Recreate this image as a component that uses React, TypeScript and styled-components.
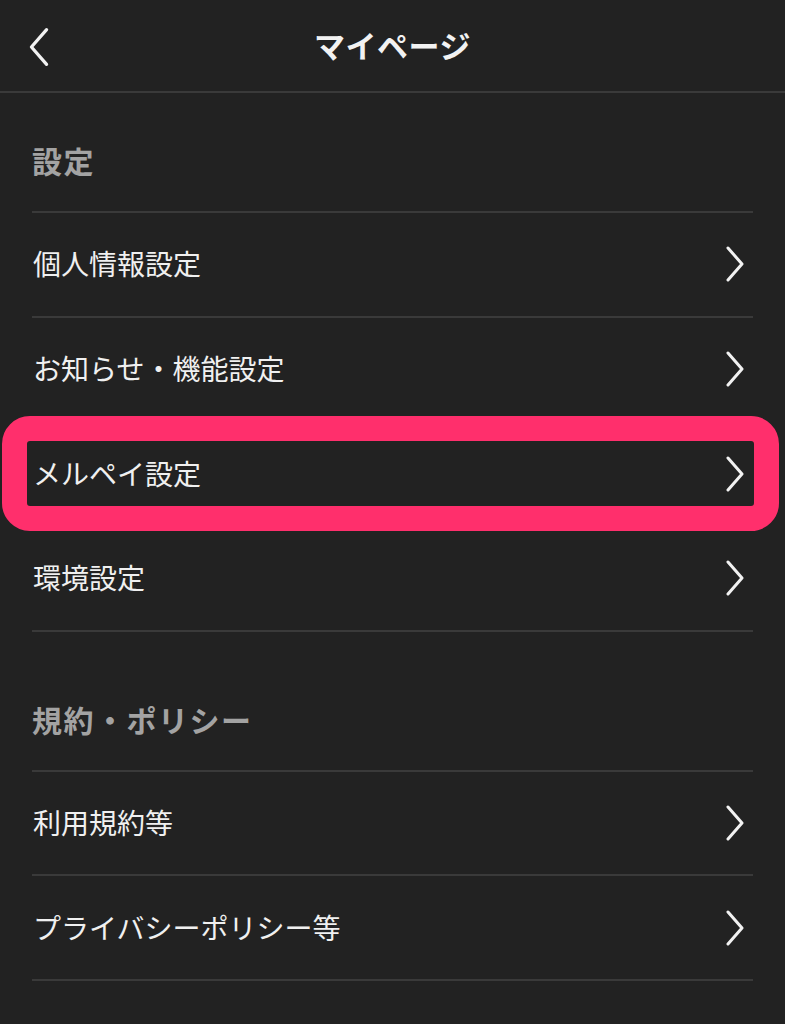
import styled, { createGlobalStyle } from 'styled-components';

const GlobalStyle = createGlobalStyle`
  html, body {
    margin: 0;
    padding: 0;
    background: #222222;
  }
  body {
    font-family: 'Noto Sans CJK JP', 'Noto Sans', sans-serif;
    color: #f2f2f2;
  }
`;

const Page = styled.div`
  width: 785px;
  min-height: 1024px;
  background: #222222;
`;

const Header = styled.header`
  height: 91px;
  display: flex;
  align-items: center;
  justify-content: center;
  position: relative;
  border-bottom: 2px solid #3a3a3a;
`;

const BackButton = styled.button`
  position: absolute;
  left: 22px;
  top: 23px;
  width: 34px;
  height: 48px;
  padding: 0;
  border: none;
  background: none;
  display: flex;
  align-items: center;
  justify-content: center;
`;

const Title = styled.h1`
  margin: 0;
  font-size: 31px;
  font-weight: 600;
  color: #f2f2f2;
  letter-spacing: 0.5px;
  margin-top: -2px;
`;

const Content = styled.main`
  padding: 0 32px;
  display: flex;
  flex-direction: column;
  gap: 20px;
`;

const Section = styled.section`
  display: flex;
  flex-direction: column;
`;

const SectionTitle = styled.h2`
  margin: 0;
  height: 120px;
  display: flex;
  align-items: flex-end;
  padding-bottom: 29px;
  box-sizing: border-box;
  font-size: 30px;
  font-weight: 600;
  letter-spacing: 1.5px;
  color: #a3a3a3;
  border-bottom: 2px solid #3a3a3a;
`;

const Row = styled.div`
  position: relative;
  height: 104.7px;
  display: flex;
  align-items: center;
  justify-content: space-between;
  border-bottom: 2px solid #3a3a3a;
  box-sizing: border-box;
`;

const RowLabel = styled.span`
  font-size: 28px;
  font-weight: 400;
  color: #f0f0f0;
  padding-left: 1px;
  margin-top: -2px;
`;

const Highlight = styled.div`
  position: absolute;
  left: -30px;
  right: -26px;
  top: -6px;
  bottom: -6px;
  border: 25px solid #ff2f6c;
  border-radius: 28px;
  pointer-events: none;
`;

const Chevron = ({ dir = 'right' }: { dir?: 'left' | 'right' }) => (
  <svg
    width={dir === 'left' ? 26 : 24}
    height={dir === 'left' ? 40 : 36}
    viewBox='0 0 24 36'
    fill='none'
    stroke='#f2f2f2'
    strokeWidth={3}
    strokeLinecap='round'
    strokeLinejoin='round'
    style={{ marginRight: dir === 'right' ? 6 : 0 }}
  >
    {dir === 'right' ? <path d='M5 2 L19 18 L5 34' /> : <path d='M19 2 L5 18 L19 34' />}
  </svg>
);

const sections = [
  {
    title: '設定',
    items: ['個人情報設定', 'お知らせ・機能設定', 'メルペイ設定', '環境設定'],
  },
  {
    title: '規約・ポリシー',
    items: ['利用規約等', 'プライバシーポリシー等'],
  },
];

const App = () => (
  <Page>
    <GlobalStyle />
    <Header>
      <BackButton aria-label='戻る'>
        <Chevron dir='left' />
      </BackButton>
      <Title>マイページ</Title>
    </Header>
    <Content>
      {sections.map((section) => (
        <Section key={section.title}>
          <SectionTitle>{section.title}</SectionTitle>
          {section.items.map((item) => (
            <Row key={item}>
              <RowLabel>{item}</RowLabel>
              <Chevron />
              {item === 'メルペイ設定' && <Highlight />}
            </Row>
          ))}
        </Section>
      ))}
    </Content>
  </Page>
);

export default App;
